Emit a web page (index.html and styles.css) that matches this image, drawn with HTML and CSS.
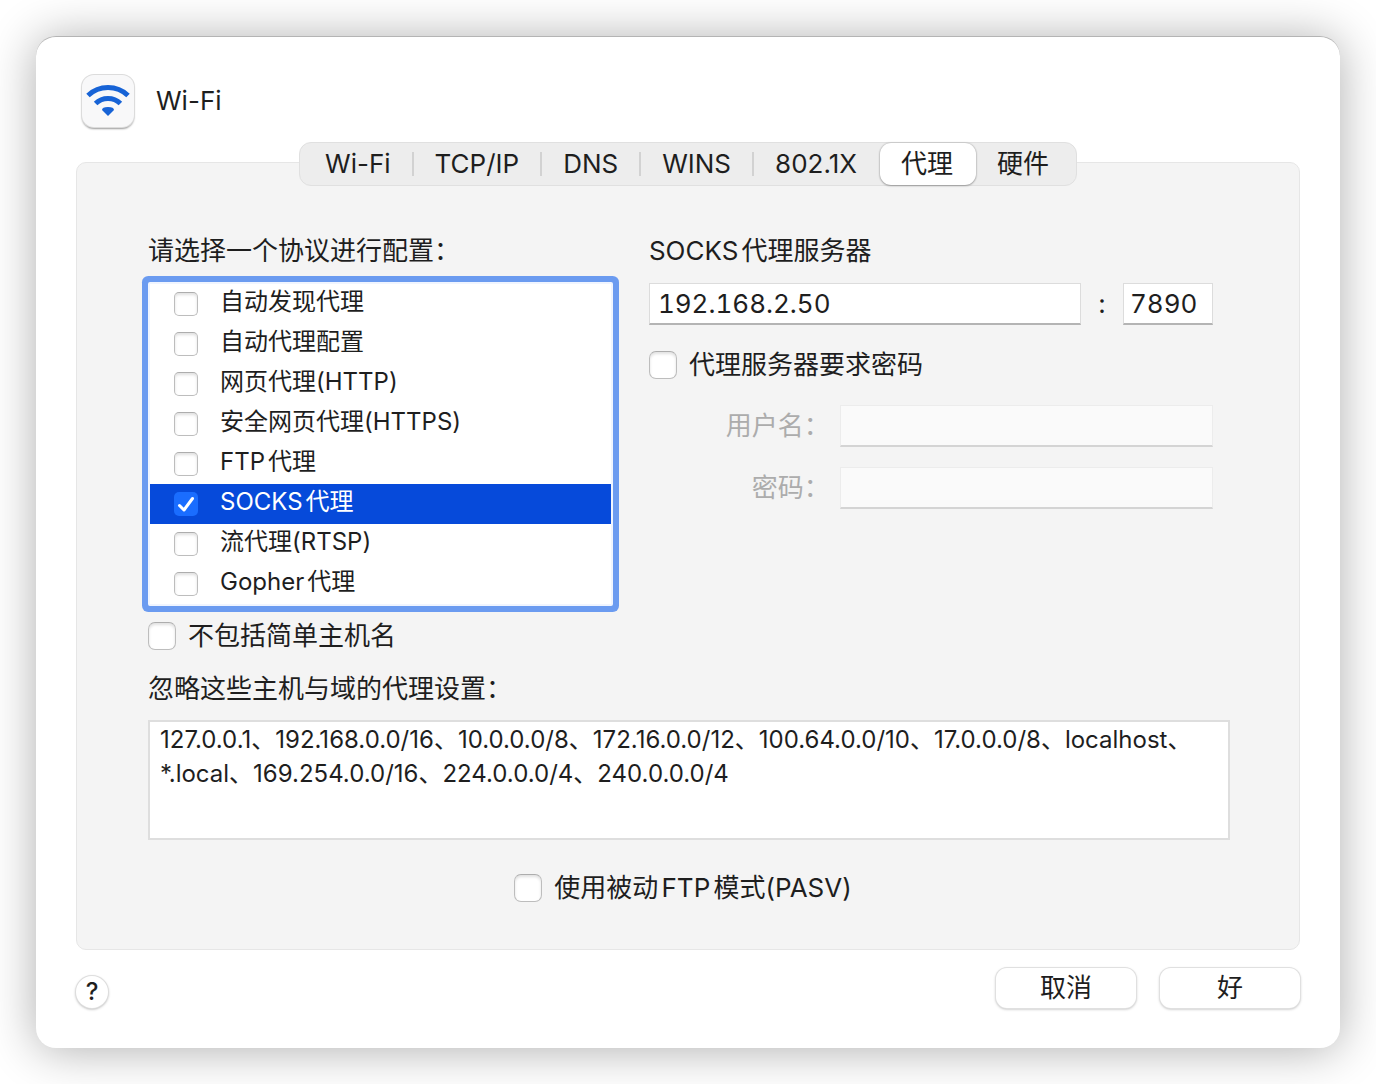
FILE: index.html
```html
<!DOCTYPE html>
<html lang="zh-CN">
<head>
    <meta charset="UTF-8">
    <meta name="viewport" content="width=device-width, initial-scale=1.0">
    <title>Wi-Fi</title>
    <link rel="stylesheet" href="styles.css">
</head>
<body>
    <form class="dialog">
        <header class="header">
            <span class="wifi-icon">
                <svg viewBox="0 0 52 52" width="52" height="52" fill="none" stroke="#1763d6" stroke-width="5" aria-hidden="true">
                    <path d="M6 20.5A29 29 0 0 1 46 20.5"/>
                    <path d="M13.6 28.6A17.5 17.5 0 0 1 38.4 28.6"/>
                    <path d="M26 41L20 35Q20 32 26 32Q32 32 32 35Z" fill="#1763d6" stroke="none"/>
                </svg>
            </span>
            <h1 class="title">Wi-Fi</h1>
        </header>

        <nav class="tabs">
            <button type="button" class="tab">Wi-Fi</button>
            <button type="button" class="tab">TCP/IP</button>
            <button type="button" class="tab">DNS</button>
            <button type="button" class="tab">WINS</button>
            <button type="button" class="tab">802.1X</button>
            <button type="button" class="tab active">代理</button>
            <button type="button" class="tab">硬件</button>
        </nav>

        <main class="panel">
            <div class="columns">
                <section class="protocols">
                    <h2 class="label">请选择一个协议进行配置：</h2>
                    <ul class="list">
                        <li><label class="row"><input type="checkbox" class="check small">自动发现代理</label></li>
                        <li><label class="row"><input type="checkbox" class="check small">自动代理配置</label></li>
                        <li><label class="row"><input type="checkbox" class="check small">网页代理(HTTP)</label></li>
                        <li><label class="row"><input type="checkbox" class="check small">安全网页代理(HTTPS)</label></li>
                        <li><label class="row"><input type="checkbox" class="check small">FTP代理</label></li>
                        <li><label class="row selected"><input type="checkbox" class="check small" checked>SOCKS代理</label></li>
                        <li><label class="row"><input type="checkbox" class="check small">流代理(RTSP)</label></li>
                        <li><label class="row"><input type="checkbox" class="check small">Gopher代理</label></li>
                    </ul>
                    <label class="option"><input type="checkbox" class="check">不包括简单主机名</label>
                </section>

                <section class="server">
                    <label class="label" for="host">SOCKS代理服务器</label>
                    <div class="address">
                        <input type="text" class="field host" id="host" value="192.168.2.50">
                        <span class="colon">:</span>
                        <input type="text" class="field port" value="7890" aria-label="端口">
                    </div>
                    <label class="option"><input type="checkbox" class="check">代理服务器要求密码</label>
                    <div class="login">
                        <label for="user">用户名：</label>
                        <input type="text" class="field" id="user" disabled>
                        <label for="password">密码：</label>
                        <input type="password" class="field" id="password" disabled>
                    </div>
                </section>
            </div>

            <label class="label" for="bypass">忽略这些主机与域的代理设置：</label>
            <textarea class="bypass" id="bypass" spellcheck="false">127.0.0.1、192.168.0.0/16、10.0.0.0/8、172.16.0.0/12、100.64.0.0/10、17.0.0.0/8、localhost、
*.local、169.254.0.0/16、224.0.0.0/4、240.0.0.0/4</textarea>
            <label class="option passive"><input type="checkbox" class="check">使用被动FTP模式(PASV)</label>
        </main>

        <footer class="footer">
            <button type="button" class="help">?</button>
            <div class="actions">
                <button type="button" class="button">取消</button>
                <button type="submit" class="button">好</button>
            </div>
        </footer>
    </form>
</body>
</html>
```
FILE: styles.css
```css
* {
    box-sizing: border-box;
}

body {
    margin: 0;
    padding: 36px;
    background-color: #fff;
    color: #1e1e1e;
    font-family: Inter, "Noto Sans CJK SC", sans-serif;
    font-size: 26px;
    line-height: 40px;
    text-autospace: normal;
}

button,
input,
textarea {
    margin: 0;
    color: inherit;
    font: inherit;
}

.dialog {
    display: flex;
    flex-direction: column;
    min-height: calc(100vh - 72px);
    padding: 38px 40px 40px;
    background-color: #fff;
    border-radius: 20px;
    box-shadow: 0 2px 48px rgba(0, 0, 0, 0.32);
    border-top: 1px solid #b4b4b4;
}

.header {
    display: flex;
    align-items: center;
    gap: 22px;
    padding-left: 6px;
}

.wifi-icon {
    width: 52px;
    height: 52px;
    background-color: #f8f8f9;
    border-radius: 12px;
    box-shadow: 0 0 0 1px #dcdcdc, 0 2px 2px rgba(0, 0, 0, 0.4);
}

.wifi-icon svg {
    display: block;
}

.title {
    margin: 0;
    font-size: 26px;
    font-weight: 400;
}

/* the tab bar straddles the top edge of the panel */
.tabs {
    position: relative;
    display: flex;
    align-self: center;
    height: 44px;
    margin-top: 15px;
    margin-bottom: -24px;
    padding: 0 4px;
    background-color: #ededed;
    border: 1px solid #e0e0e0;
    border-radius: 12px;
}

.tab {
    display: flex;
    align-items: center;
    padding: 0 0 0 21px;
    background: none;
    border: none;
    line-height: 40px;
}

.tab::after {
    content: "";
    width: 2px;
    height: 24px;
    margin-left: 21px;
    background-color: #d2d2d2;
}

.tab:nth-child(5)::after,
.tab.active::after,
.tab:last-child::after {
    background: none;
}

.tab.active {
    background-color: #fff;
    border-radius: 11px;
    box-shadow: 0 0 2px rgba(0, 0, 0, 0.3), 0 1px 2px rgba(0, 0, 0, 0.25);
}

.panel {
    display: flex;
    flex: 1;
    flex-direction: column;
    padding: 68px 69px 40px 71px;
    background-color: #f4f4f4;
    border: 1px solid #e6e6e6;
    border-radius: 10px;
}

.columns {
    display: grid;
    grid-template-columns: 4fr 5fr;
    gap: 36px;
}

.label {
    display: block;
    margin: 0;
    font-size: 26px;
    font-weight: 400;
}

.list {
    margin: 11px 0 10px;
    padding: 0;
    list-style: none;
    background-color: #fff;
    border: 2px solid #f0f5ff;
    border-radius: 2px;
    box-shadow: 0 0 0 6px #6b9bf0;
    font-size: 24px;
}

.row {
    display: flex;
    align-items: flex-start;
    gap: 22px;
    height: 40px;
    padding-left: 24px;
    line-height: 36px;
}

.row.selected {
    background-color: #064ada;
    color: #fff;
}

.check {
    appearance: none;
    flex: none;
    width: 28px;
    height: 28px;
    background-color: #fff;
    border: 1px solid #bdbdbd;
    border-top-color: #adadad;
    border-radius: 7px;
    box-shadow: inset 0 2px 3px rgba(0, 0, 0, 0.12);
}

.check.small {
    width: 24px;
    height: 24px;
    margin-top: 8px;
    border-radius: 5px;
}

.check:checked {
    background: #1a6dff url("data:image/svg+xml,%3Csvg xmlns='http://www.w3.org/2000/svg' viewBox='0 0 24 24'%3E%3Cpath d='M5.5 13.5L10 18L18.5 6.5' fill='none' stroke='white' stroke-width='3' stroke-linecap='round' stroke-linejoin='round'/%3E%3C/svg%3E") center / 24px;
    border: none;
    box-shadow: none;
}

.option {
    display: flex;
    align-items: center;
    gap: 12px;
}

.server {
    padding-right: 17px;
}

.address {
    display: flex;
    align-items: center;
    margin: 12px 0 20px;
}

.field {
    width: 100%;
    height: 42px;
    padding: 0 8px;
    background-color: #fff;
    border: 1px solid #dcdcdc;
    border-bottom: 2px solid #b4b4b4;
    font-variant-numeric: tabular-nums;
}

.host {
    flex: 1;
}

.colon {
    width: 42px;
    text-align: center;
}

.port {
    width: 90px;
    padding: 0 6px;
}

.login {
    display: grid;
    grid-template-columns: 181px 1fr;
    gap: 20px 10px;
    align-items: center;
    margin-top: 20px;
    color: #acacac;
    text-align: right;
}

.field:disabled {
    background-color: #fafafa;
    border-color: #ececec;
    border-bottom-color: #d4d4d4;
}

.columns + .label {
    margin-top: 13px;
}

.bypass {
    display: block;
    width: 100%;
    height: 120px;
    margin: 11px 0 28px;
    padding: 1px 10px;
    background-color: #fff;
    border: 2px solid #dedede;
    font-size: 24px;
    line-height: 34px;
    resize: none;
}

.passive {
    align-self: center;
    padding-right: 12px;
}

.footer {
    display: flex;
    align-items: flex-end;
    justify-content: space-between;
    margin-top: 18px;
}

.help {
    width: 32px;
    height: 32px;
    padding: 0;
    background-color: #fff;
    border: none;
    border-radius: 50%;
    box-shadow: 0 0 0 1px #dedede, 0 1px 3px rgba(0, 0, 0, 0.4);
    font-size: 24px;
    font-weight: 500;
    line-height: 32px;
}

.actions {
    display: flex;
    gap: 24px;
}

.button {
    width: 140px;
    height: 40px;
    padding: 0;
    background-color: #fff;
    border: none;
    border-radius: 11px;
    box-shadow: 0 0 0 1px #e0e0e0, 0 1px 3px rgba(0, 0, 0, 0.35);
    line-height: 38px;
}
```
